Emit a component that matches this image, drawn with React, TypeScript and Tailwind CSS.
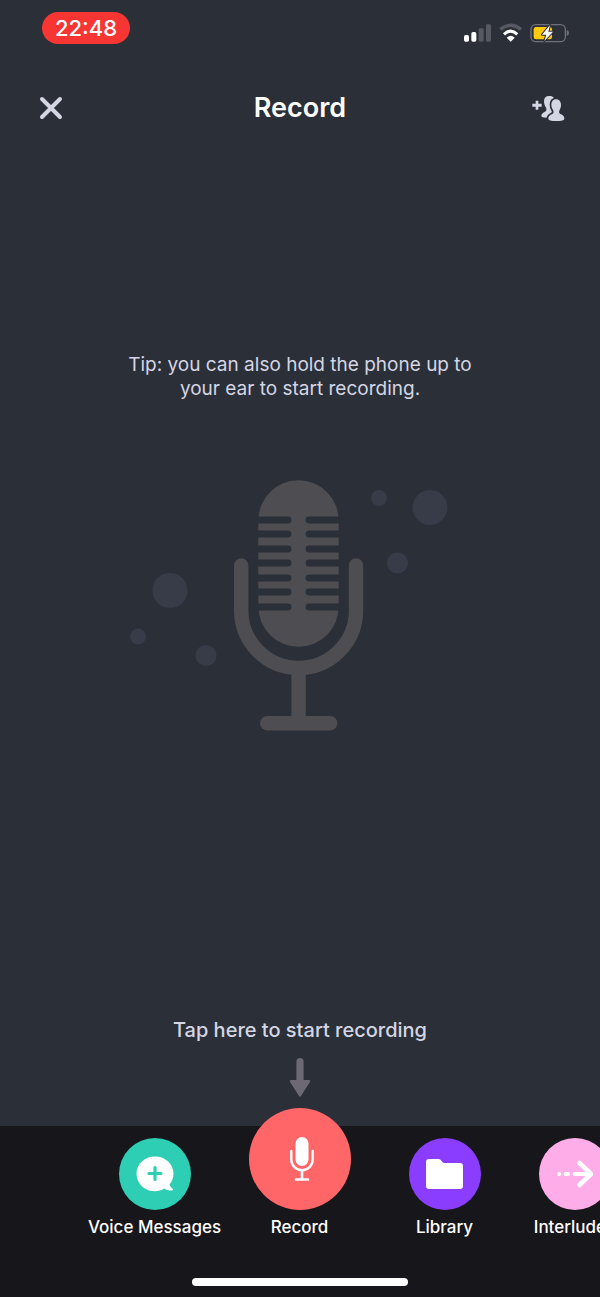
import React from "react";

const StatusIcons: React.FC = () => (
  <svg viewBox="68 68 321 60" className="h-5 w-[107px]" role="img" aria-label="Signal, wifi and battery">
    {/* Signal */}
    <rect x="71" y="104" width="15" height="20" rx="5" fill="#fff" />
    <rect x="93" y="95" width="15" height="29" rx="5" fill="#fff" />
    <rect x="115" y="84" width="15" height="40" rx="4" fill="#575962" />
    <rect x="137" y="72" width="15" height="52" rx="4" fill="#575962" />

    {/* Wifi */}
    <path d="M180 87 Q211 63 242 87" fill="none" stroke="#575962" strokeWidth="10" />
    <path d="M191 102 Q211 83 231 102" fill="none" stroke="#fff" strokeWidth="9" />
    <path d="M199 112 Q211 101 223 112 L211 124 Z" fill="#fff" />

    {/* Battery */}
    <rect x="272" y="73" width="103" height="51" rx="14" fill="none" stroke="#6e6f79" strokeWidth="4" />
    <path d="M379 89 Q386 91 386 98 Q386 105 379 107 Z" fill="#6e6f79" />
    <rect x="280" y="80" width="55" height="37" rx="7" fill="#fecb0b" />
    <path
      d="M329 74 L305 103 H318 L312 122 L338 94 H324 Z"
      fill="#fff"
      stroke="#2b2f38"
      strokeWidth="6"
      strokeLinejoin="round"
      paintOrder="stroke"
    />
  </svg>
);

const AddPeopleIcon: React.FC = () => (
  <svg viewBox="278 280 99 81" className="h-[27px] w-[33px]" fill="#d4d6e4" aria-hidden="true">
    <path d="M289 297h8v9h10v9h-10v9h-8v-9h-10v-9h10z" />
    <path d="M329 283c12 0 17 6 17 13 0 9-3 13-5 20l-2 20-8 10-10 2c-9 0-15-1-15-5 0-7 5-10 11-13 6-4 5-8 2-14-3-5-5-10-5-17 0-10 5-16 15-16z" />
    <path
      d="M350 293c10 0 15 7 15 17 0 8-3 13-5 17-2 6 0 9 5 11 6 3 10 6 10 13 0 5-9 7-24 7s-24-2-24-7c0-7 4-10 10-13 5-2 7-5 5-11-2-4-6-9-6-17 0-10 5-17 14-17z"
      stroke="#2b2f38"
      strokeWidth="10"
      paintOrder="stroke"
    />
  </svg>
);

const slots = [520, 534, 549, 563, 578, 592, 607];

const Microphone: React.FC = () => (
  <svg viewBox="130 480 340 251" className="h-[251px] w-[340px]" aria-hidden="true">
    <g fill="#383b48">
      <circle cx="430" cy="507.5" r="17.5" />
      <circle cx="379" cy="498" r="8" />
      <circle cx="397.5" cy="563" r="10.6" />
      <circle cx="170" cy="590.5" r="17.6" />
      <circle cx="138" cy="636.5" r="8" />
      <circle cx="206" cy="655.5" r="10.6" />
    </g>
    <rect x="258.3" y="480.3" width="80.4" height="166.4" rx="40.2" fill="#4e4d51" />
    {slots.map((y) => (
      <g key={y} stroke="#2b2f38" strokeWidth="6.8" strokeLinecap="round">
        <path d={`M250 ${y}H288`} />
        <path d={`M309 ${y}H347`} />
      </g>
    ))}
    <g fill="none" stroke="#4e4d51" strokeWidth="14.4" strokeLinecap="round">
      <path d="M241.2 565.5v45a57.4 57.4 0 0 0 114.8 0v-45" />
      <path d="M298.6 670v50" />
      <path d="M267.2 723.2h63" />
    </g>
  </svg>
);

const NavItem: React.FC<{ label: string; className: string; children: React.ReactNode }> = ({
  label,
  className,
  children,
}) => (
  <button type="button" className="flex w-full flex-col items-center gap-[5px]">
    <span className={`flex items-center justify-center rounded-full ${className}`}>{children}</span>
    <span className="text-[17px] leading-6 font-medium whitespace-nowrap text-white">{label}</span>
  </button>
);

const App: React.FC = () => {
  return (
    <div className="flex min-h-screen flex-col overflow-x-clip bg-[#2b2f38] font-['Inter',sans-serif] text-[#d4d6e4]">
      {/* Status bar */}
      <div className="flex items-start justify-between pt-3 pr-[30px] pl-[42px]">
        <time className="w-[88px] rounded-full bg-[#f73634] text-center text-[22px] leading-8 font-medium text-white">
          22:48
        </time>
        <div className="pt-[11px]">
          <StatusIcons />
        </div>
      </div>

      {/* Header */}
      <header className="mt-11 grid grid-cols-3 items-center px-[35px]">
        <button type="button" aria-label="Close" className="justify-self-start p-1">
          <svg viewBox="0 0 24 24" className="size-6" stroke="#d4d6e4" strokeWidth="4" strokeLinecap="round">
            <path d="M3 3l18 18M21 3L3 21" />
          </svg>
        </button>
        <h1 className="text-center text-[27px] leading-10 font-semibold text-white">Record</h1>
        <button type="button" aria-label="Add people" className="justify-self-end">
          <AddPeopleIcon />
        </button>
      </header>

      {/* Recording area */}
      <main className="flex flex-1 flex-col items-center pt-[225px] pb-7">
        <p className="max-w-[400px] text-center text-[19px] leading-6">
          Tip: you can also hold the phone up to
          <br />
          your ear to start recording.
        </p>
        <div className="mt-[79px]">
          <Microphone />
        </div>
        <div className="mt-auto flex flex-col items-center gap-[14px]">
          <p className="text-xl leading-7 font-medium">Tap here to start recording</p>
          <svg viewBox="0 0 22 40" className="h-10 w-[22px]" fill="#6c6975" aria-hidden="true">
            <path d="M7.4 3.6a3.6 3.6 0 0 1 7.2 0V22h5.6q1.8 0 .9 1.8L12 38q-1 1.6-2 0L.9 23.8q-.9-1.8.9-1.8h5.6z" />
          </svg>
        </div>
      </main>

      {/* Bottom navigation */}
      <nav className="bg-[#17161b] pt-3 pb-[11px]">
        <ul className="ml-[calc(50%-218px)] flex items-start">
          <li className="w-[145px] shrink-0">
            <NavItem label="Voice Messages" className="size-18 bg-[#2eceb4]">
              <svg viewBox="0 0 38 36" className="h-9 w-[38px]" aria-hidden="true">
                <path
                  d="M19 .5C29.5.5 37.5 8 37.5 17.6c0 4.4-1.5 8-4 11 .5 1.7 1.500 2.800 3 4.200.8.8.3 1.700-.8 1.700-3.200 0-5.500-.6-7.600-2-2.600 1.800-5.600 2.800-9.100 2.800C8.500 35.300.5 27.500.5 17.800.5 8 8.500.5 19 .5z"
                  fill="#fff"
                />
                <path d="M19 11.5v12M13 17.5h12" stroke="#2eceb4" strokeWidth="3.2" strokeLinecap="round" />
              </svg>
            </NavItem>
          </li>
          <li className="-mt-[30px] w-[145px] shrink-0">
            <NavItem label="Record" className="size-[102px] bg-[#ff6668]">
              <svg viewBox="0 0 24 44" className="ml-1 h-11 w-6" aria-hidden="true">
                <rect x="5.5" y="0" width="13" height="29" rx="6.5" fill="#fff" />
                <g fill="none" stroke="#fff" strokeLinecap="round">
                  <path d="M1.3 14v8.5a10.7 10.7 0 0 0 21.4 0V14" strokeWidth="2.4" />
                  <path d="M12 33.5V42M6 42.5h12" strokeWidth="2.6" />
                </g>
              </svg>
            </NavItem>
          </li>
          <li className="w-[145px] shrink-0">
            <NavItem label="Library" className="size-18 bg-[#8b3dff]">
              <svg viewBox="0 0 37 30" className="h-[30px] w-[37px]" fill="#fff" aria-hidden="true">
                <path d="M3 0h9.5q1.5 0 2.5 1.3l1.3 1.7q.8 1 2.2 1H34q3 0 3 3v20q0 3-3 3H3q-3 0-3-3V3q0-3 3-3z" />
              </svg>
            </NavItem>
          </li>
          <li className="w-[115px] shrink-0">
            <NavItem label="Interludes" className="size-18 bg-[#ffade8]">
              <svg
                viewBox="0 0 36 28"
                className="h-7 w-9"
                fill="none"
                stroke="#fff"
                strokeWidth="4"
                strokeLinecap="round"
                strokeLinejoin="round"
                aria-hidden="true"
              >
                <path d="M2.2 14h.1M8.5 14h2.5M17.5 14H33" />
                <path d="M22.5 3L34 14 22.5 25" strokeWidth="4.6" />
              </svg>
            </NavItem>
          </li>
        </ul>
        <div className="mx-auto mt-[39px] h-2 w-[36%] rounded-full bg-white" />
      </nav>
    </div>
  );
};

export default App;
